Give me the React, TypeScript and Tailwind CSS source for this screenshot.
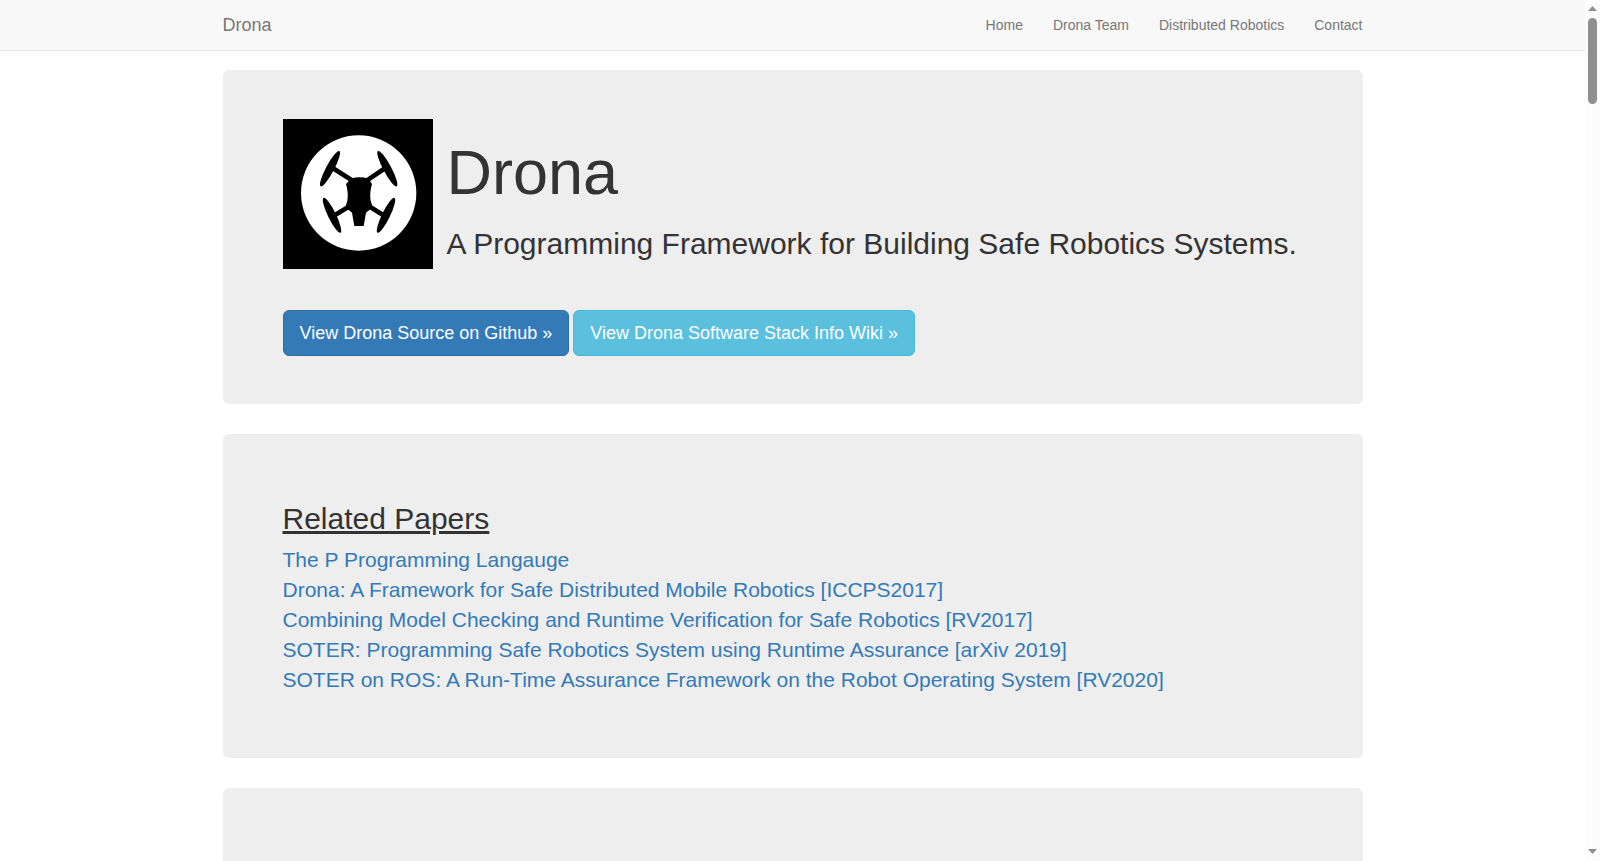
const papers = [
  "The P Programming Langauge",
  "Drona: A Framework for Safe Distributed Mobile Robotics [ICCPS2017]",
  "Combining Model Checking and Runtime Verification for Safe Robotics [RV2017]",
  "SOTER: Programming Safe Robotics System using Runtime Assurance [arXiv 2019]",
  "SOTER on ROS: A Run-Time Assurance Framework on the Robot Operating System [RV2020]",
];

const navLinks = ["Home", "Drona Team", "Distributed Robotics", "Contact"];

function DroneLogo() {
  return (
    <svg viewBox="39 27 450 450" className="w-[150px] h-[150px] shrink-0 bg-black">
      <circle cx="266" cy="249" r="173" fill="#fff" />
      <g fill="#000">
        <ellipse cx="180" cy="176" rx="12" ry="60" transform="rotate(28 180 176)" />
        <ellipse cx="352" cy="176" rx="12" ry="60" transform="rotate(-28 352 176)" />
        <ellipse cx="186" cy="316" rx="12" ry="58" transform="rotate(-26 186 316)" />
        <ellipse cx="348" cy="316" rx="12" ry="58" transform="rotate(26 348 316)" />
        <path d="M243 206 Q268 198 296 206 L306 222 Q298 250 302 272 L308 292 L288 308 L281 348 L253 348 L246 308 L226 292 L232 272 Q236 250 228 222 Z" />
      </g>
      <g stroke="#000" strokeWidth="14" fill="none">
        <path d="M188 174 L248 212" />
        <path d="M346 174 L290 212" />
        <path d="M190 318 L240 288" />
        <path d="M344 318 L296 288" />
      </g>
    </svg>
  );
}

function Jumbotron({ className, children }: { className: string; children?: React.ReactNode }) {
  return <div className={`bg-[#eeeeee] rounded-[6px] px-[60px] ${className}`}>{children}</div>;
}

function Scrollbar() {
  return (
    <div className="w-[15px] shrink-0 bg-[#fcfcfc] flex flex-col items-center pt-[6px] pb-[7px]">
      <svg viewBox="0 0 9 5" className="w-[9px] h-[5px]">
        <path d="M4.5 0 L9 5 L0 5 Z" fill="#8f8f8f" />
      </svg>
      <div className="w-[9px] h-[86px] mt-[7px] rounded-full bg-[#8f8f8f]" />
      <svg viewBox="0 0 9 5" className="w-[9px] h-[5px] mt-auto">
        <path d="M0 0 L9 0 L4.5 5 Z" fill="#8f8f8f" />
      </svg>
    </div>
  );
}

export default function App() {
  return (
    <div className="flex h-[861px] overflow-hidden bg-white text-[#333333] font-['Liberation_Sans',Arial,sans-serif]">
      <div className="flex-1 min-w-0">
        <nav className="h-[51px] bg-[#f8f8f8] border-b border-[#e7e7e7]">
          <div className="w-[1140px] mx-auto flex items-center justify-between h-[50px]">
            <a className="text-[18px] text-[#777777]">Drona</a>
            <ul className="flex">
              {navLinks.map((l) => (
                <li key={l} className="pl-[30px] text-[14px] text-[#777777]">{l}</li>
              ))}
            </ul>
          </div>
        </nav>

        <div className="w-[1140px] mx-auto pt-[19px]">
          <Jumbotron className="pt-[49px] pb-[48px] mb-[30px]">
            <div className="flex items-start">
              <DroneLogo />
              <div className="ml-[14px]">
                <h1 className="text-[63px] leading-[69px] mt-[19px] font-normal">Drona</h1>
                <h2 className="text-[30px] leading-[33px] mt-[20px] font-normal">A Programming Framework for Building Safe Robotics Systems.</h2>
              </div>
            </div>
            <div className="flex gap-[4px] mt-[41px]">
              <a className="h-[46px] flex items-center px-[16px] text-[18px] text-white bg-[#337ab7] border border-[#2e6da4] rounded-[6px]">View Drona Source on Github »</a>
              <a className="h-[46px] flex items-center px-[16px] text-[18px] text-white bg-[#5bc0de] border border-[#46b8da] rounded-[6px]">View Drona Software Stack Info Wiki »</a>
            </div>
          </Jumbotron>

          <Jumbotron className="pt-[48px] pb-[48px] mb-[30px]">
            <h2 className="text-[30px] leading-[33px] mt-[20px] mb-[10px] underline">Related Papers</h2>
            <div className="text-[21px] leading-[30px] text-[#337ab7] mb-[15px]">
              {papers.map((p) => (
                <div key={p}>{p}</div>
              ))}
            </div>
          </Jumbotron>

          <Jumbotron className="h-[400px]" />
        </div>
      </div>
      <Scrollbar />
    </div>
  );
}
